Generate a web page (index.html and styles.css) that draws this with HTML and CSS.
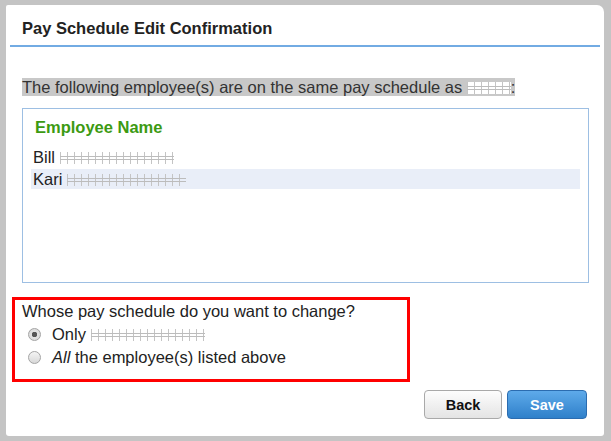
FILE: index.html
```html
<!DOCTYPE html>
<html lang="en">
<head>
    <meta charset="UTF-8">
    <title>Pay Schedule Edit Confirmation</title>
    <link rel="stylesheet" href="styles.css">
</head>
<body>
    <!-- Confirmation dialog -->
    <div class="dialog">
        <div class="dialog-header">
            <h1>Pay Schedule Edit Confirmation</h1>
        </div>

        <div class="dialog-body">
            <p class="intro"><span class="selected">The following employee(s) are on the same pay schedule as <span class="redact redact-light" style="width: 44px;"></span>:</span></p>

            <!-- Employee list -->
            <div class="list-box">
                <div class="list-heading">Employee Name</div>
                <div class="list-row">Bill <span class="redact" style="width: 114px;"></span></div>
                <div class="list-row active">Kari <span class="redact" style="width: 119px;"></span></div>
            </div>

            <!-- Choice -->
            <div class="choice-box">
                <div class="choice-question">Whose pay schedule do you want to change?</div>
                <label class="choice">
                    <input type="radio" name="whose" checked>
                    <span>Only <span class="redact" style="width: 114px;"></span></span>
                </label>
                <label class="choice">
                    <input type="radio" name="whose">
                    <span><em>All</em> the employee(s) listed above</span>
                </label>
            </div>
        </div>

        <div class="dialog-footer">
            <button class="btn btn-back">Back</button>
            <button class="btn btn-save">Save</button>
        </div>
    </div>
</body>
</html>
```

FILE: styles.css
```css
/* Page behind the dialog */
body {
    margin: 0;
    padding: 5px 7px 5px 6px;
    background-color: #c4c4c4;
    font-family: "Liberation Sans", Arial, sans-serif;
    color: #222;
}

/* Dialog */
.dialog {
    background-color: #fff;
    height: 431px;
    border-radius: 2px 7px 3px 3px;
    box-sizing: border-box;
}

.dialog-header {
    margin: 0 4px;
    padding: 14px 12px 8px;
    border-bottom: 2px solid #72abe3;
}

.dialog-header h1 {
    margin: 0;
    font-size: 16.5px;
    line-height: 18px;
    font-weight: bold;
    color: #222;
}

.dialog-body {
    padding: 0 15px 0 16px;
}

.intro {
    margin: 31px 0 12px;
    font-size: 16.5px;
    line-height: 18px;
    color: #333;
}

.intro .selected {
    background-color: #c8c8c8;
}

/* Redacted names */
.redact {
    display: inline-block;
    height: 12px;
    vertical-align: -1px;
    background-image:
        linear-gradient(to bottom, transparent 4px, #bcbcbc 4px, #bcbcbc 5px, transparent 5px, transparent 7px, #bcbcbc 7px, #bcbcbc 8px, transparent 8px),
        repeating-linear-gradient(to right, #c4c4c4 0, #c4c4c4 1px, transparent 1px, transparent 7px);
}

.redact-light {
    background-color: #fff;
}

/* Employee list */
.list-box {
    height: 175px;
    box-sizing: border-box;
    border: 1px solid #9dbfe3;
    padding: 8px;
}

.list-heading {
    padding: 0 4px;
    line-height: 20px;
    margin-bottom: 10px;
    font-size: 16.5px;
    font-weight: bold;
    color: #3c9a12;
}

.list-row {
    padding: 0 2px;
    line-height: 20px;
    margin-bottom: 2px;
    font-size: 16.5px;
    color: #222;
}

.list-row.active {
    background-color: #e9eef8;
}

/* Choice box */
.choice-box {
    margin: 14px 0 0 -10px;
    width: 398px;
    box-sizing: border-box;
    border: 3px solid #f00;
    padding: 0 0 10px 7px;
    font-size: 16.5px;
    line-height: 23px;
}

.choice {
    display: flex;
    align-items: center;
    gap: 11px;
    padding-left: 6px;
}

.choice input {
    appearance: none;
    margin: 0;
    width: 13px;
    height: 13px;
    border-radius: 50%;
    border: 1px solid #a4a4a4;
    background: linear-gradient(#f4f4f4, #d8d8d8);
    box-sizing: border-box;
}

.choice input:checked {
    background: radial-gradient(circle, #555 0, #555 2.5px, #e2e2e2 3px, #d6d6d6 100%);
}

/* Footer buttons */
.dialog-footer {
    display: flex;
    justify-content: flex-end;
    gap: 5px;
    padding: 8px 17px 0 0;
}

.btn {
    height: 29px;
    border-radius: 4px;
    font-family: "Liberation Sans", Arial, sans-serif;
    font-size: 14.5px;
    font-weight: bold;
    cursor: pointer;
}

.btn-back {
    width: 78px;
    color: #111;
    border: 1px solid #a9a9a9;
    background: linear-gradient(#fdfdfd, #e4e4e4);
}

.btn-save {
    width: 80px;
    color: #fff;
    border: 1px solid #2b6cb0;
    background: linear-gradient(#5eaaea, #2f80ca);
}
```
